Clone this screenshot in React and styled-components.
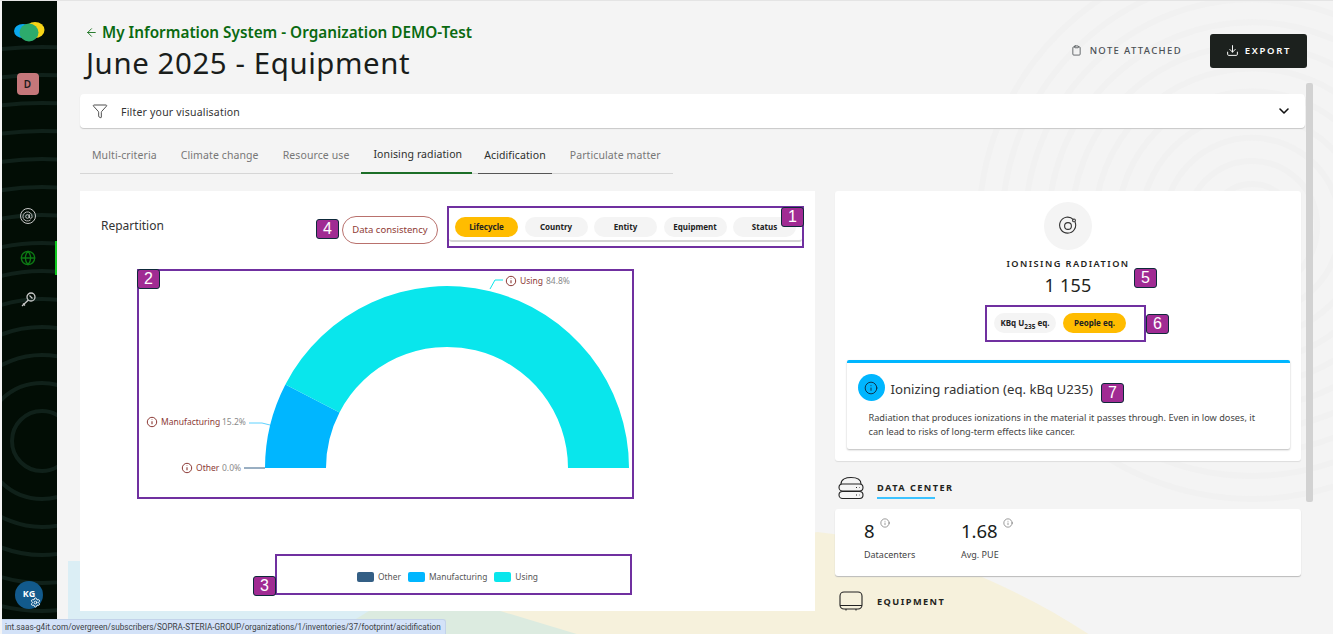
import React from 'react'
import styled, { createGlobalStyle } from 'styled-components'
import { ArrowLeft, AtSign, ChevronDown, Clipboard, Download, Filter, Globe, Info, Settings } from 'lucide-react'

const Global = createGlobalStyle`
  html, body { margin: 0; height: 100%; overflow: hidden; background: #f4f4f4; }
  body { font-family: "Noto Sans", "Liberation Sans", sans-serif; color: #1f2421; }
  * { box-sizing: border-box; }
`
const Shell = styled.div`
  position: relative;
  display: flex;
  width: 1333px;
  height: 634px;
  overflow: hidden;
  border-top: 1px solid #e4e4e4;
`
const Sidebar = styled.nav`
  position: relative;
  flex: 0 0 55px;
  display: flex;
  flex-direction: column;
  align-items: center;
  margin-left: 2px;
  background: #020d05;
  overflow: hidden;
  padding-top: 20px;
`
const SideRings = styled.svg`
  position: absolute;
  inset: 0;
`
const Logo = styled.svg`
  position: relative;
  margin-left: -2px;
  flex: none;
`
const OrgBadge = styled.div`
  position: relative;
  width: 22px;
  height: 22px;
  margin: 30px 0 0 -4px;
  border-radius: 4px;
  background: #c4777a;
  color: #1c1c1c;
  font-size: 10px;
  font-weight: 600;
  display: flex;
  align-items: center;
  justify-content: center;
`
const SideItems = styled.div`
  position: relative;
  display: flex;
  flex-direction: column;
  width: 100%;
  margin-top: 104px;
  gap: 8px;
`
const SideItem = styled.div`
  height: 34px;
  display: flex;
  align-items: center;
  justify-content: center;
  padding-right: 2px;
  border-right: 2px solid ${p => (p.$active ? '#0fc81e' : 'transparent')};
  color: ${p => (p.$active ? '#0d7a14' : '#c9c9c9')};
`
const RingIcon = styled.span`
  width: 16px;
  height: 16px;
  border: 1px solid #c9c9c9;
  border-radius: 50%;
  display: flex;
  align-items: center;
  justify-content: center;
`
const Avatar = styled.div`
  position: relative;
  width: 28px;
  height: 28px;
  margin: auto 0 25px -1px;
  border-radius: 50%;
  background: #125a8c;
  color: #fff;
  font-size: 9px;
  font-weight: 700;
  display: flex;
  align-items: center;
  justify-content: center;
  padding-bottom: 3px;
`
const AvatarGear = styled.span`
  position: absolute;
  left: 15px;
  top: 16px;
  display: flex;
  color: #fff;
`
const Main = styled.main`
  position: relative;
  flex: 1;
  min-width: 0;
  padding: 0 26px 0 23px;
  overflow: hidden;
`
const Backdrop = styled.svg`
  position: absolute;
  left: 0;
  top: 0;
`
const Content = styled.div`
  position: relative;
`
const Header = styled.header`
  height: 93px;
  display: flex;
  justify-content: space-between;
  padding-left: 5px;
`
const Crumb = styled.div`
  display: flex;
  align-items: center;
  gap: 4px;
  margin-top: 21px;
  height: 20px;
  font-size: 15.3px;
  font-weight: 600;
  color: #0a6a10;
  white-space: nowrap;
`
const Title = styled.h1`
  margin: 0 0 0 1px;
  font-size: 29.4px;
  line-height: 42px;
  font-weight: 400;
  letter-spacing: 0.6px;
  color: #1a1d1b;
  white-space: nowrap;
`
const Actions = styled.div`
  display: flex;
  align-items: flex-start;
  gap: 28px;
  padding-top: 33px;
`
const NoteButton = styled.div`
  height: 32px;
  display: flex;
  align-items: center;
  gap: 8px;
  font-size: 9.5px;
  font-weight: 500;
  letter-spacing: 1.35px;
  color: #4b5054;
`
const ExportButton = styled.div`
  width: 97px;
  height: 34px;
  border-radius: 3px;
  background: #1c211e;
  color: #fff;
  display: flex;
  align-items: center;
  justify-content: center;
  gap: 6px;
  font-size: 9.5px;
  font-weight: 600;
  letter-spacing: 1.7px;
  padding-bottom: 2px;
`
const FilterBar = styled.div`
  height: 34px;
  margin-right: 2px;
  background: #fff;
  border-radius: 4px;
  box-shadow: 0 1px 1px #c8c8c8;
  display: flex;
  align-items: center;
  padding: 0 13px 0 12px;
  font-size: 10.5px;
  color: #333;
`
const FilterLabel = styled.span`
  margin-left: 13px;
  flex: 1;
  padding-top: 2px;
  letter-spacing: 0.2px;
`
const Tabs = styled.div`
  display: flex;
  width: 593px;
  height: 34px;
  margin-top: 12px;
  border-bottom: 1px solid #d6d6d6;
`
const tabPadding = { active: '0 10px 4px 12px', hover: '0 6px 4px' }
const Tab = styled.div`
  height: 34px;
  padding: ${p => tabPadding[p.$state] || '0 12px 4px'};
  margin-right: ${p => p.$gap || 0}px;
  display: flex;
  align-items: center;
  font-size: 10.5px;
  letter-spacing: 0.1px;
  white-space: nowrap;
  color: ${p => (p.$state ? '#2c2f2d' : '#777')};
  border-bottom: ${p => (p.$state === 'active' ? '2px solid #1c6e27' : p.$state === 'hover' ? '1px solid #555' : 'none')};
`
const Columns = styled.div`
  display: flex;
  gap: 20px;
  margin-top: 17px;
`
const ChartCard = styled.section`
  position: relative;
  flex: 0 0 735px;
  min-width: 0;
  height: 420px;
  background: #fff;
  padding: 25px 11px 0 21px;
`
const ChartTop = styled.div`
  display: flex;
  align-items: flex-start;
  height: 53px;
`
const ChartTitle = styled.div`
  width: 241px;
  padding-top: 2px;
  font-size: 12px;
  line-height: 16px;
  color: #333;
`
const ConsistencyButton = styled.div`
  width: 96px;
  height: 28px;
  border: 1px solid #b9716d;
  border-radius: 14px;
  color: #8f3b36;
  font-size: 9.5px;
  display: flex;
  align-items: center;
  justify-content: center;
  padding-bottom: 2px;
`
const PillTray = styled.div`
  margin-left: 11px;
  width: 353px;
  height: 26px;
  padding: 1px 6px 0;
  display: flex;
  justify-content: space-between;
  border-bottom: 2px solid #d4d4d4;
  border-radius: 0 0 3px 3px;
`
const Pill = styled.div`
  width: ${p => p.$w || 63}px;
  height: 20px;
  padding-bottom: 2px;
  border-radius: 10px;
  background: ${p => (p.$on ? '#ffbc00' : '#f4f4f4')};
  color: #222;
  font-size: 8px;
  font-weight: 700;
  display: flex;
  align-items: center;
  justify-content: center;
  white-space: nowrap;
  sub { font-size: 6.5px; line-height: 0; }
`
const ChartSvg = styled.svg`
  display: block;
  margin-left: -21px;
`
const Legend = styled.div`
  display: flex;
  align-items: center;
  justify-content: center;
  gap: 7px;
  width: 735px;
  margin: 3px 0 0 -21px;
  font-size: 8.4px;
  line-height: 12px;
  color: #555;
`
const LegendItem = styled.div`
  display: flex;
  align-items: center;
  gap: 4px;
`
const Swatch = styled.span`
  width: 17px;
  height: 10px;
  border-radius: 2px;
  background: ${p => p.$color};
`
const SideColumn = styled.div`
  flex: 0 0 466px;
`
const ImpactCard = styled.section`
  position: relative;
  height: 270px;
  background: #fff;
  border-radius: 3px;
  box-shadow: 0 1px 1px #ddd;
  padding: 11px 11px 0;
  display: flex;
  flex-direction: column;
  align-items: center;
`
const ImpactIcon = styled.div`
  width: 48px;
  height: 48px;
  border-radius: 50%;
  background: #f4f4f4;
  display: flex;
  align-items: center;
  justify-content: center;
`
const ImpactName = styled.div`
  margin-top: 7px;
  font-size: 9.2px;
  line-height: 13px;
  font-weight: 600;
  letter-spacing: 1.45px;
`
const ImpactValue = styled.div`
  font-size: 18px;
  line-height: 24px;
  margin-top: 3px;
  letter-spacing: 0.2px;
`
const UnitRow = styled.div`
  display: flex;
  gap: 7px;
  margin: 16px 16px 0 0;
`
const InfoCard = styled.div`
  width: 443px;
  height: 89px;
  margin-top: 27px;
  border-top: 3px solid #00b6ff;
  border-radius: 2px;
  box-shadow: 0 1px 2px #bbb;
  padding: 11px 11px 0;
`
const InfoHead = styled.div`
  display: flex;
  align-items: center;
  gap: 6px;
  font-size: 13.2px;
  color: #333;
  white-space: nowrap;
`
const InfoTitle = styled.span`
  padding-top: 3px;
`
const InfoDisc = styled.span`
  width: 27px;
  height: 27px;
  border-radius: 50%;
  background: #00b6ff;
  display: flex;
  align-items: center;
  justify-content: center;
  color: #123;
`
const InfoBody = styled.p`
  margin: 10px 20px 0 11px;
  font-size: 9.2px;
  line-height: 14px;
  color: #444;
`
const SectionHead = styled.div`
  display: flex;
  align-items: center;
  gap: 13px;
  height: 24px;
  margin: ${p => p.$top}px 0 0 3px;
`
const SectionName = styled.div`
  font-size: 9.2px;
  font-weight: 700;
  letter-spacing: 1.45px;
  padding-bottom: ${p => (p.$underlined ? 2 : 1)}px;
  position: relative;
  &::after {
    content: '';
    display: ${p => (p.$underlined ? 'block' : 'none')};
    position: absolute;
    left: 0;
    bottom: -3px;
    width: 58px;
    height: 2px;
    background: #3cc3ff;
  }
`
const StatCard = styled.div`
  height: 67px;
  margin-top: 9px;
  background: #fff;
  border-radius: 3px;
  box-shadow: 0 1px 1px #bbb;
  display: flex;
  padding: 9px 0 0 29px;
`
const Stat = styled.div`
  width: ${p => p.$w}px;
`
const StatValue = styled.div`
  display: flex;
  font-size: 18.5px;
  line-height: 26px;
  gap: 5px;
  color: #1a1d1b;
  svg { margin-top: 0; color: #555; }
`
const StatLabel = styled.div`
  margin-top: 4px;
  font-size: 9px;
  line-height: 14px;
  color: #444;
`
const Scrollbar = styled.div`
  position: absolute;
  left: 1306px;
  top: 82px;
  width: 7px;
  height: 419px;
  border-radius: 2px;
  background: #d2d2d2;
`
const StatusBar = styled.div`
  position: absolute;
  left: 2px;
  bottom: 0;
  width: 444px;
  height: 15px;
  padding-left: 3px;
  background: #d3e2f8;
  border: 1px solid #c3d3ea;
  border-width: 1px 1px 0 0;
  border-top-right-radius: 3px;
  font-family: Roboto, "Liberation Sans", sans-serif;
  font-size: 8.2px;
  line-height: 14px;
  color: #3c3f44;
  white-space: nowrap;
`
// the purple callouts pasted on top of the screenshot
const CalloutBox = styled.div`
  position: absolute;
  left: ${p => p.$x}px;
  top: ${p => p.$y}px;
  width: ${p => p.$w}px;
  height: ${p => p.$h}px;
  border: 2px solid #7030a0;
  pointer-events: none;
`
const Badge = styled.div`
  position: absolute;
  left: ${p => p.$x}px;
  top: ${p => p.$y}px;
  width: 23px;
  height: 20px;
  border: 1px solid #0e2a3a;
  border-radius: 3px;
  background: #a02b93;
  color: #fff;
  font-size: 16px;
  line-height: 18px;
  text-align: center;
  font-family: "Liberation Sans", sans-serif;
`

const SLICE = { other: '#345f85', manufacturing: '#00b6ff', using: '#09e6ec' }

function ChartLabel({ x, y, name, value, valueX }) {
  return (
    <g>
      <circle cx={x + 5} cy={y - 3} r="4.7" fill="none" stroke="#8c3a36" strokeWidth="1" />
      <path d="M0 -2.6v0.7M0 -0.8v3" transform={`translate(${x + 5} ${y - 3})`} stroke="#8c3a36" strokeWidth="1.1" />
      <text x={x + 14} y={y} fontSize="8.5" fill="#8c3a36">{name}</text>
      <text x={valueX} y={y} fontSize="8.5" fill="#8a8a8a">{value}</text>
    </g>
  )
}

function StatInfo() {
  return <Info size={10} strokeWidth={1.4} />
}

export default function App() {
  return (
    <Shell>
      <Global />
      <Sidebar>
        <SideRings width="55" height="634">
          {[30, 58, 86, 114, 142, 170, 198, 226, 254, 282, 310, 338, 366, 394].map(r => (
            <circle key={r} cx="40" cy="440" r={r} fill="none" stroke="#10211a" strokeWidth="4" />
          ))}
        </SideRings>
        <Logo width="32" height="22" viewBox="0 0 32 22">
          <ellipse cx="10" cy="10" rx="9" ry="7" fill="#0aa8ee" />
          <ellipse cx="22" cy="9" rx="9.5" ry="8" fill="#f7d417" />
          <ellipse cx="16" cy="11.5" rx="9.5" ry="9" fill="#2dab6c" />
        </Logo>
        <OrgBadge>D</OrgBadge>
        <SideItems>
          <SideItem><RingIcon><AtSign size={11} /></RingIcon></SideItem>
          <SideItem $active><Globe size={16} /></SideItem>
          <SideItem>
            <svg width="16" height="16" viewBox="0 0 16 16" fill="none" stroke="#c9c9c9" strokeWidth="1.3">
              <circle cx="11" cy="5" r="4" />
              <path d="M8.4 8 2 14M3 11.5 5 13.5M9.5 3.5 12.5 6.5" />
            </svg>
          </SideItem>
        </SideItems>
        <Avatar>
          KG
          <AvatarGear><Settings size={11} strokeWidth={2} /></AvatarGear>
        </Avatar>
      </Sidebar>

      <Main>
        <Backdrop width="1276" height="634">
          <g fill="none" stroke="#f1f1f1" strokeWidth="6">
            {[40, 62, 84, 106, 128, 150, 172, 194, 216, 238, 260].map(r => (
              <circle key={r} cx="1195" cy="225" r={r * 1.05} />
            ))}
          </g>
          <path d="M11 560H400V634H11Z" fill="#dbeef5" />
          <path d="M273 634 L320 605 L560 500 L720 634Z" fill="#dcebe0" />
          <path d="M523 634 L430 606 L760 531 C850 540 950 580 1033 634Z" fill="#f6f1dc" />
        </Backdrop>
        <Content>
          <Header>
            <div>
              <Crumb><ArrowLeft size={13} strokeWidth={1.6} /> My Information System - Organization DEMO-Test</Crumb>
              <Title>June 2025 - Equipment</Title>
            </div>
            <Actions>
              <NoteButton><Clipboard size={11} strokeWidth={1.8} /> NOTE ATTACHED</NoteButton>
              <ExportButton><Download size={13} strokeWidth={1.8} /> EXPORT</ExportButton>
            </Actions>
          </Header>

          <FilterBar>
            <Filter size={16} strokeWidth={1.3} />
            <FilterLabel>Filter your visualisation</FilterLabel>
            <ChevronDown size={16} strokeWidth={2.4} color="#111" />
          </FilterBar>

          <Tabs>
            <Tab>Multi-criteria</Tab>
            <Tab>Climate change</Tab>
            <Tab>Resource use</Tab>
            <Tab $state="active" $gap={6}>Ionising radiation</Tab>
            <Tab $state="hover" $gap={6}>Acidification</Tab>
            <Tab>Particulate matter</Tab>
          </Tabs>

          <Columns>
            <ChartCard>
              <ChartTop>
                <ChartTitle>Repartition</ChartTitle>
                <ConsistencyButton>Data consistency</ConsistencyButton>
                <PillTray>
                  <Pill $on>Lifecycle</Pill>
                  <Pill>Country</Pill>
                  <Pill>Entity</Pill>
                  <Pill>Equipment</Pill>
                  <Pill>Status</Pill>
                </PillTray>
              </ChartTop>
              <ChartSvg width="735" height="299" viewBox="0 269 735 299">
                <path d="M185 468 A182 182 0 0 1 205.4 384.4 L259.5 412.4 A121 121 0 0 0 246 468Z" fill={SLICE.manufacturing} />
                <path d="M205.4 384.4 A182 182 0 0 1 549 468 L488 468 A121 121 0 0 0 259.5 412.4Z" fill={SLICE.using} />
                <path d="M164 468H185" stroke={SLICE.other} strokeWidth="1" fill="none" />
                <path d="M169 423H182L190 425" stroke="#5fd2ff" strokeWidth="1" fill="none" />
                <path d="M410 289 L415 280H423" stroke={SLICE.using} strokeWidth="1" fill="none" />
                <ChartLabel x={102} y={471} name="Other" value="0.0%" valueX={142} />
                <ChartLabel x={67} y={425} name="Manufacturing" value="15.2%" valueX={142} />
                <ChartLabel x={426} y={284} name="Using" value="84.8%" valueX={466} />
              </ChartSvg>
              <Legend>
                <LegendItem><Swatch $color={SLICE.other} />Other</LegendItem>
                <LegendItem><Swatch $color={SLICE.manufacturing} />Manufacturing</LegendItem>
                <LegendItem><Swatch $color={SLICE.using} />Using</LegendItem>
              </Legend>
              <CalloutBox $x={367} $y={15} $w={357} $h={42} />
              <Badge $x={701} $y={16}>1</Badge>
              <CalloutBox $x={57} $y={78} $w={497} $h={230} />
              <Badge $x={57} $y={78}>2</Badge>
              <CalloutBox $x={195} $y={363} $w={357} $h={41} />
              <Badge $x={173} $y={385}>3</Badge>
              <Badge $x={236} $y={28}>4</Badge>
            </ChartCard>

            <SideColumn>
              <ImpactCard>
                <ImpactIcon>
                  <svg width="20" height="20" viewBox="0 0 20 20" fill="none" stroke="#333" strokeWidth="1.1">
                    <path d="M15.4 3.6A8 8 0 1 0 17 6" />
                    <circle cx="10" cy="10" r="3.4" />
                    <circle cx="16" cy="4.4" r="1.4" />
                  </svg>
                </ImpactIcon>
                <ImpactName>IONISING RADIATION</ImpactName>
                <ImpactValue>1 155</ImpactValue>
                <UnitRow>
                  <Pill $w={62}><span>KBq U<sub>235</sub> eq.</span></Pill>
                  <Pill $on>People eq.</Pill>
                </UnitRow>
                <InfoCard>
                  <InfoHead>
                    <InfoDisc><Info size={14} strokeWidth={1.5} /></InfoDisc>
                    <InfoTitle>Ionizing radiation (eq. kBq U235)</InfoTitle>
                  </InfoHead>
                  <InfoBody>
                    Radiation that produces ionizations in the material it passes through. Even in low doses, it can lead to risks of long-term effects like cancer.
                  </InfoBody>
                </InfoCard>
                <CalloutBox $x={150} $y={114} $w={161} $h={37} />
                <Badge $x={299} $y={77}>5</Badge>
                <Badge $x={311} $y={123}>6</Badge>
                <Badge $x={266} $y={192}>7</Badge>
              </ImpactCard>

              <SectionHead $top={15}>
                <svg width="26" height="24" viewBox="0 0 26 24" fill="none" stroke="#222" strokeWidth="1.1">
                  <path d="M3 8C3 3 8 1.5 13 1.5S23 3 23 8" />
                  <rect x="1" y="8" width="24" height="7" rx="3.5" />
                  <rect x="1" y="15.5" width="24" height="7" rx="3.5" />
                  <path d="M18 11.5h1M21 11.5h.5M18 19h1M21 19h.5" />
                </svg>
                <SectionName $underlined>DATA CENTER</SectionName>
              </SectionHead>
              <StatCard>
                <Stat $w={97}>
                  <StatValue>8 <StatInfo /></StatValue>
                  <StatLabel>Datacenters</StatLabel>
                </Stat>
                <Stat $w={120}>
                  <StatValue>1.68 <StatInfo /></StatValue>
                  <StatLabel>Avg. PUE</StatLabel>
                </Stat>
              </StatCard>
              <SectionHead $top={14}>
                <svg width="26" height="22" viewBox="0 0 26 22" fill="none" stroke="#222" strokeWidth="1.1">
                  <rect x="2" y="1" width="22" height="17" rx="4" />
                  <path d="M2 14.5H24M8 18v1.5M18 18v1.5" />
                </svg>
                <SectionName>EQUIPMENT</SectionName>
              </SectionHead>
            </SideColumn>
          </Columns>
        </Content>
      </Main>
      <Scrollbar />
      <StatusBar>int.saas-g4it.com/overgreen/subscribers/SOPRA-STERIA-GROUP/organizations/1/inventories/37/footprint/acidification</StatusBar>
    </Shell>
  )
}
